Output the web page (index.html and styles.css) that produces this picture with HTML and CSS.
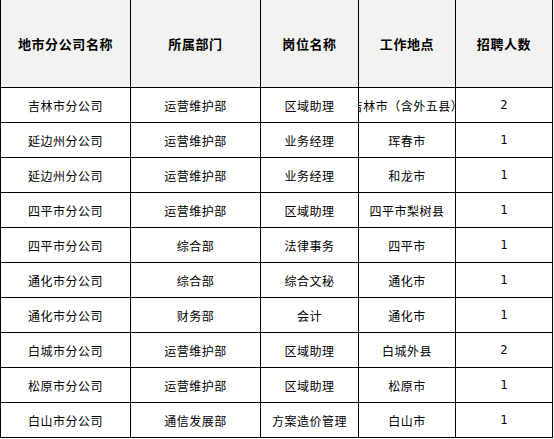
FILE: index.html
```html
<!DOCTYPE html>
<html lang="zh-CN">
<head>
<meta charset="utf-8">
<link rel="stylesheet" href="styles.css">
</head>
<body>
<div class="sheet">
  <div class="cell head">地市分公司名称</div>
  <div class="cell head">所属部门</div>
  <div class="cell head">岗位名称</div>
  <div class="cell head">工作地点</div>
  <div class="cell head">招聘人数</div>

  <div class="cell">吉林市分公司</div>
  <div class="cell">运营维护部</div>
  <div class="cell">区域助理</div>
  <div class="cell clip"><span>吉林市（含外五县）</span></div>
  <div class="cell num">2</div>

  <div class="cell">延边州分公司</div>
  <div class="cell">运营维护部</div>
  <div class="cell">业务经理</div>
  <div class="cell">珲春市</div>
  <div class="cell num">1</div>

  <div class="cell">延边州分公司</div>
  <div class="cell">运营维护部</div>
  <div class="cell">业务经理</div>
  <div class="cell">和龙市</div>
  <div class="cell num">1</div>

  <div class="cell">四平市分公司</div>
  <div class="cell">运营维护部</div>
  <div class="cell">区域助理</div>
  <div class="cell">四平市梨树县</div>
  <div class="cell num">1</div>

  <div class="cell">四平市分公司</div>
  <div class="cell">综合部</div>
  <div class="cell">法律事务</div>
  <div class="cell">四平市</div>
  <div class="cell num">1</div>

  <div class="cell">通化市分公司</div>
  <div class="cell">综合部</div>
  <div class="cell">综合文秘</div>
  <div class="cell">通化市</div>
  <div class="cell num">1</div>

  <div class="cell">通化市分公司</div>
  <div class="cell">财务部</div>
  <div class="cell">会计</div>
  <div class="cell">通化市</div>
  <div class="cell num">1</div>

  <div class="cell">白城市分公司</div>
  <div class="cell">运营维护部</div>
  <div class="cell">区域助理</div>
  <div class="cell">白城外县</div>
  <div class="cell num">2</div>

  <div class="cell">松原市分公司</div>
  <div class="cell">运营维护部</div>
  <div class="cell">区域助理</div>
  <div class="cell">松原市</div>
  <div class="cell num">1</div>

  <div class="cell">白山市分公司</div>
  <div class="cell">通信发展部</div>
  <div class="cell">方案造价管理</div>
  <div class="cell">白山市</div>
  <div class="cell num">1</div>
</div>
</body>
</html>
```

FILE: styles.css
```css
html, body {
  margin: 0;
  padding: 0;
  background: #ffffff;
}

.sheet {
  display: grid;
  grid-template-columns: 129px 129px 97px 96px 96px;
  grid-template-rows: 87px repeat(10, 34px);
  gap: 1px;
  padding: 0 1px 1px 1px;
  background: #000000;
  width: max-content;
  font-family: "Noto Sans CJK SC", "Noto Sans", sans-serif;
  font-size: 12px;
  letter-spacing: 0.5px;
  color: #000000;
}

.cell {
  background: #ffffff;
  display: flex;
  align-items: center;
  justify-content: center;
  white-space: nowrap;
  overflow: hidden;
}

.head {
  background: #f2f2f2;
  font-weight: bold;
  font-size: 13px;
  letter-spacing: 0.6px;
}

.clip span {
  flex: none;
}

.num {
  font-family: "DejaVu Sans Mono", monospace;
  font-size: 12px;
}
```
